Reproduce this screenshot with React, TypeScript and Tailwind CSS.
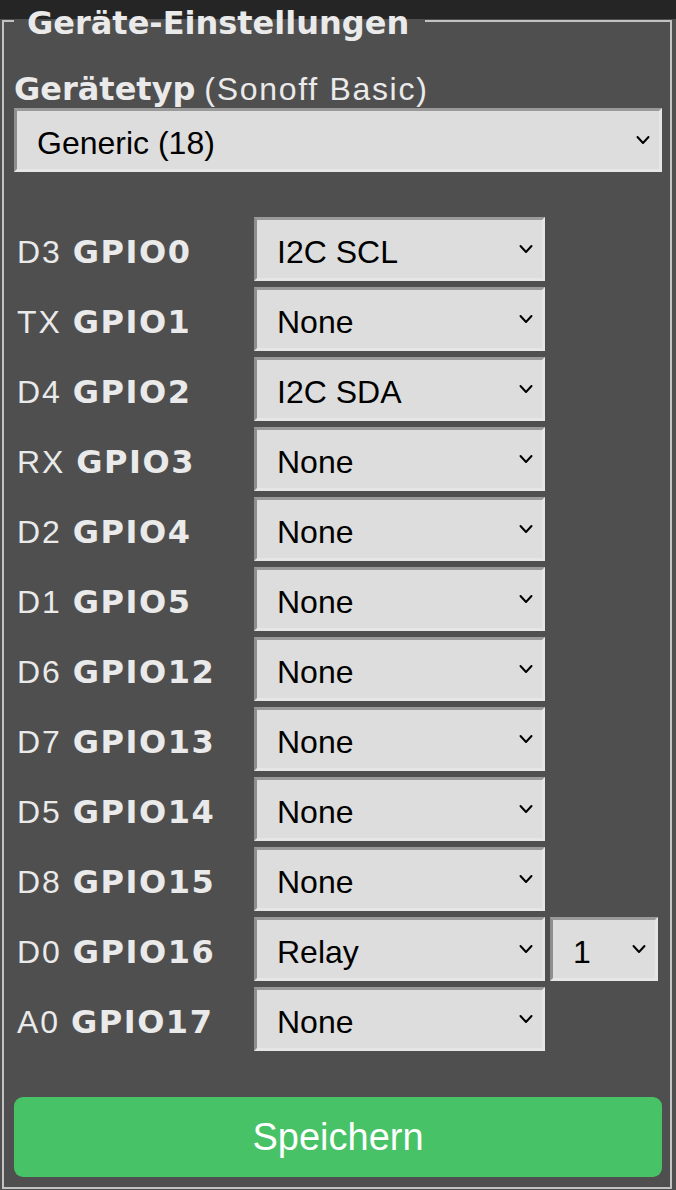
import React from 'react';

const sans = "font-['Liberation_Sans',Arial,sans-serif]";
const boldFace = "font-['DejaVu_Sans',Verdana,sans-serif] font-bold";

const rows = [
  { pin: 'D3', gpio: 'GPIO0', value: 'I2C SCL' },
  { pin: 'TX', gpio: 'GPIO1', value: 'None' },
  { pin: 'D4', gpio: 'GPIO2', value: 'I2C SDA' },
  { pin: 'RX', gpio: 'GPIO3', value: 'None' },
  { pin: 'D2', gpio: 'GPIO4', value: 'None' },
  { pin: 'D1', gpio: 'GPIO5', value: 'None' },
  { pin: 'D6', gpio: 'GPIO12', value: 'None' },
  { pin: 'D7', gpio: 'GPIO13', value: 'None' },
  { pin: 'D5', gpio: 'GPIO14', value: 'None' },
  { pin: 'D8', gpio: 'GPIO15', value: 'None' },
  { pin: 'D0', gpio: 'GPIO16', value: 'Relay', index: '1' },
  { pin: 'A0', gpio: 'GPIO17', value: 'None' },
];

function Chevron({ className = '' }: { className?: string }) {
  return (
    <svg
      className={`pointer-events-none absolute top-1/2 -translate-y-1/2 ${className}`}
      width="14"
      height="9"
      viewBox="0 0 14 9"
      fill="none"
      stroke="#000"
      strokeWidth="2"
      strokeLinecap="round"
      strokeLinejoin="round"
    >
      <path d="M1.5 1.5l5.5 6 5.5-6" />
    </svg>
  );
}

function Select({ value, className = '', options }: { value: string; className?: string; options?: string[] }) {
  const opts = options ?? [value];
  return (
    <div className={`relative h-[64px] ${className}`}>
      <select
        defaultValue={value}
        className={`h-full w-full appearance-none rounded-none border-[3px] border-t-[#9a9a9a] border-l-[#8e8e8e] border-r-[#e6e6e6] border-b-[#e6e6e6] bg-[#dddddd] pl-[20px] pr-[36px] pt-[5px] text-[32px] text-black outline-none ${sans}`}
      >
        {opts.map((o) => (
          <option key={o} value={o}>
            {o}
          </option>
        ))}
      </select>
      <Chevron className="right-[12px]" />
    </div>
  );
}

export default function App() {
  return (
    <div className="min-h-[1190px] w-[676px] bg-[linear-gradient(#252525_0_19px,#4f4f4f_19px)] pl-[2px]">
      <fieldset className="w-[670px] border-2 border-[#c2c2c2] pb-[10px] pl-[10px] pr-[8px] pt-[33px]">
        <legend className={`pl-[13px] pr-[16px] text-[32px] leading-[42px] text-[#eaeaea] ${boldFace}`}>
          <span className="relative top-[2px]">Geräte-Einstellungen</span>
        </legend>

        <div className={`-mt-[2px] mb-[2px] h-[33px] text-[32px] leading-[33px] text-[#eaeaea] ${sans}`}>
          <span className={boldFace}>Gerätetyp</span>{' '}
          <span className="tracking-[1.7px]">(Sonoff Basic)</span>
        </div>
        <Select value="Generic (18)" options={['Sonoff Basic (1)', 'Generic (18)']} className="w-full" />

        <div className="mt-[45px] flex flex-col gap-[6px]">
          {rows.map((r) => (
            <div key={r.gpio} className="flex items-center">
              <div className={`w-[240px] pl-[3px] pt-[6px] text-[32px] text-[#eaeaea] ${sans}`}>
                <span className="tracking-[2px]">{r.pin} </span>
                <span className={`${boldFace} tracking-[1.5px]`}>{r.gpio}</span>
              </div>
              <Select value={r.value} className="w-[291px]" />
              {r.index && <Select value={r.index} className="ml-[5px] w-[108px]" />}
            </div>
          ))}
        </div>

        <button
          type="button"
          className={`mt-[46px] h-[80px] w-full rounded-[9px] bg-[#47c266] text-[38px] text-white ${sans}`}
        >
          Speichern
        </button>
      </fieldset>
    </div>
  );
}
